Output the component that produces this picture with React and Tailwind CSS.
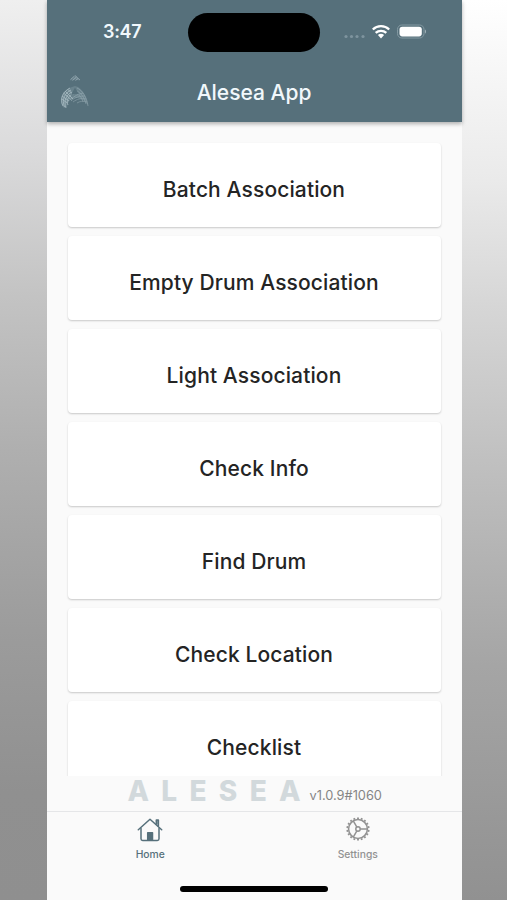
const items = [
  'Batch Association',
  'Empty Drum Association',
  'Light Association',
  'Check Info',
  'Find Drum',
  'Check Location',
  'Checklist',
];

function Logo() {
  return (
    <svg className="h-[36px] w-[30px]" viewBox="0 0 30 36" fill="none">
      <g fill="#8fa5ae">
        <path d="M10 6.500l5-4.500 5 4.500-5-1z" opacity="0.35" />
        <path d="M1 28C0 21 5 15 12 13l3-1 3 1c5 3 9 10 10 18-4-5-8-7-12-7-5 0-8 3-9 9l-3 1C2 32 1 30 1 28z" opacity="0.35" />
      </g>
      <g stroke="#b7c8cf" strokeWidth="0.9">
        <path d="M10.500 5.500l4-3.500 M12.500 6.500l4-3.500 M15.500 6.500l2.500-2 M15 1.500l5 4.500" opacity="0.6" />
        <g opacity="0.75">
          <path d="M3 32C-1 24 4 17 10 14" />
          <path d="M4.500 33C1.500 25 5 19 11 16" />
          <path d="M6 34C3.500 27 6 21 12 18" />
          <path d="M8 31C6 27 8 23 12 20" />
          <path d="M5 17l8 8 M3.500 19l8 7 M2 22l7 5 M1.500 25l6 4 M8 15.500l5 5" />
        </g>
        <g opacity="0.4">
          <path d="M17 14C22 16 27 23 28 32" />
          <path d="M17 17C21 19 24 23 26 30" />
          <path d="M17 20C20 21 22 24 23 28" />
          <path d="M11 25C15 22 18 20 23 19" />
          <path d="M11 27C15 23 20 22 25 22" />
          <path d="M13 28C17 25 21 24 26 25" />
          <path d="M17 29C20 27 23 27 27 28" />
        </g>
      </g>
      <path d="M15 13.500l4 7c-2.500-.7-5-.7-8 .5z" fill="#56707b" />
    </svg>
  );
}

function StatusIcons() {
  return (
    <svg className="h-[16px] w-[84px]" viewBox="0 0 84 16" fill="none">
      <g fill="#7e949e">
        <circle cx="3" cy="12.500" r="1.600" />
        <circle cx="8.500" cy="12.500" r="1.600" />
        <circle cx="14" cy="12.500" r="1.600" />
        <circle cx="20" cy="12.500" r="1.600" />
      </g>
      <g stroke="#fff" strokeWidth="2.300">
        <path d="M29.800 5.500a11.800 11.800 0 0 1 16.400 0" />
        <path d="M32.700 8.900a7.700 7.700 0 0 1 10.600 0" />
      </g>
      <path d="M34.900 11.100a4.500 4.500 0 0 1 6.200 0L38 14.400z" fill="#fff" />
      <rect x="54.500" y="1" width="26.500" height="13" rx="4.300" stroke="#8399a2" />
      <rect x="56.500" y="2.800" width="22.300" height="9.600" rx="2.800" fill="#fff" />
      <path d="M82 5.500v4.200c1.300-.7 1.300-3.500 0-4.200z" fill="#a5b6bd" />
    </svg>
  );
}

function HomeIcon() {
  return (
    <svg className="h-[24px] w-[26px]" viewBox="0 0 26 24" fill="none" stroke="#56707b" strokeWidth="1.500" strokeLinecap="round" strokeLinejoin="round">
      <path d="M1.300 11.800L13 1.200l11.700 10.600" />
      <path d="M4 10.500v10.300c0 1 .6 1.600 1.600 1.600h14.800c1 0 1.600-.6 1.600-1.600V10.500" />
      <path d="M19.400 6V2h1.900v6" strokeWidth="1.700" />
      <path d="M10.700 21.800v-7h4.800v7z" fill="#56707b" />
    </svg>
  );
}

const spokes = [0, 120, 240];
const teeth = Array.from({ length: 18 }, (_, i) => i * 20 + 10);

function SettingsIcon() {
  return (
    <svg className="h-[24px] w-[24px]" viewBox="-12 -12 24 24" fill="none" stroke="#929292" strokeWidth="1.500">
      <circle r="9.400" />
      <circle r="2.200" />
      {spokes.map((a) => (
        <path key={a} d="M2.200 0H9.500" transform={`rotate(${a})`} />
      ))}
      {teeth.map((a) => (
        <path key={a} d="M9.800 0H11.600" strokeWidth="1.900" transform={`rotate(${a})`} />
      ))}
    </svg>
  );
}

export default function App() {
  return (
    <div className="flex h-[900px] w-[507px] overflow-hidden font-['Inter','Liberation_Sans',sans-serif]">
      <div className="w-[46.5px] bg-[linear-gradient(to_bottom,#efefef,#dadadb_17%,#c3c3c3_33%,#afafaf_50%,#9c9c9c_70%,#909090_88%,#8f8f8f)]" />
      <div className="flex w-[415px] flex-col bg-[#fafafa]">
        <header className="relative z-10 h-[122px] shrink-0 bg-[#56707b] shadow-[0_2px_4px_rgba(0,0,0,0.3)]">
          <div className="grid h-[64px] grid-cols-[141.5px_132px_1fr] items-center">
            <span className="pl-[56.5px] text-[18px] leading-none font-semibold tracking-[-0.3px] text-[#f1f8fc]">3:47</span>
            <div className="h-[39px] rounded-full bg-black" />
            <div className="pl-[23px]"><StatusIcons /></div>
          </div>
          <div className="grid h-[58px] grid-cols-[56px_1fr_56px] items-center">
            <div className="-mt-[2px] pl-[13px]"><Logo /></div>
            <h1 className="text-center text-[21px] font-medium text-[#f1f8fc]">Alesea App</h1>
          </div>
        </header>
        <main className="flex h-[654px] shrink-0 flex-col gap-[8.5px] overflow-hidden px-[21px] pt-[20.6px]">
          {items.map((t) => (
            <button key={t} className="h-[84.5px] w-full shrink-0 rounded-[4px] bg-white pt-[9.6px] text-[21px] font-medium tracking-[0.12px] text-[#242424] shadow-[0_1px_2px_rgba(0,0,0,0.2)]">
              {t}
            </button>
          ))}
        </main>
        <div className="flex h-[35px] shrink-0 items-start pl-[81px]">
          <span className="mt-[1px] w-[182px] text-[28px] leading-[28px] font-extrabold tracking-[12.3px] whitespace-nowrap text-[#d2d9dc]">ALESEA</span>
          <span className="mt-[11px] text-[12.8px] leading-[18px] text-[#858585]">v1.0.9#1060</span>
        </div>
        <nav className="grid h-[61px] shrink-0 grid-cols-2 border-t border-[#e5e6e8]">
          <div className="flex flex-col items-center pt-[6px] text-[10.300px] leading-[14px] font-medium text-[#56707b]">
            <HomeIcon />
            <span className="mt-[5px]">Home</span>
          </div>
          <div className="flex flex-col items-center pt-[5px] text-[10.300px] leading-[14px] font-medium text-[#929292]">
            <SettingsIcon />
            <span className="mt-[6px]">Settings</span>
          </div>
        </nav>
        <div className="mx-auto mt-[14px] h-[6px] w-[148px] rounded-full bg-black" />
      </div>
      <div className="flex-1 bg-[linear-gradient(to_bottom,#ffffff,#eaeaea_20%,#d6d6d6_34%,#bfbfbf_52%,#a5a5a5_74%,#919191)]" />
    </div>
  );
}
